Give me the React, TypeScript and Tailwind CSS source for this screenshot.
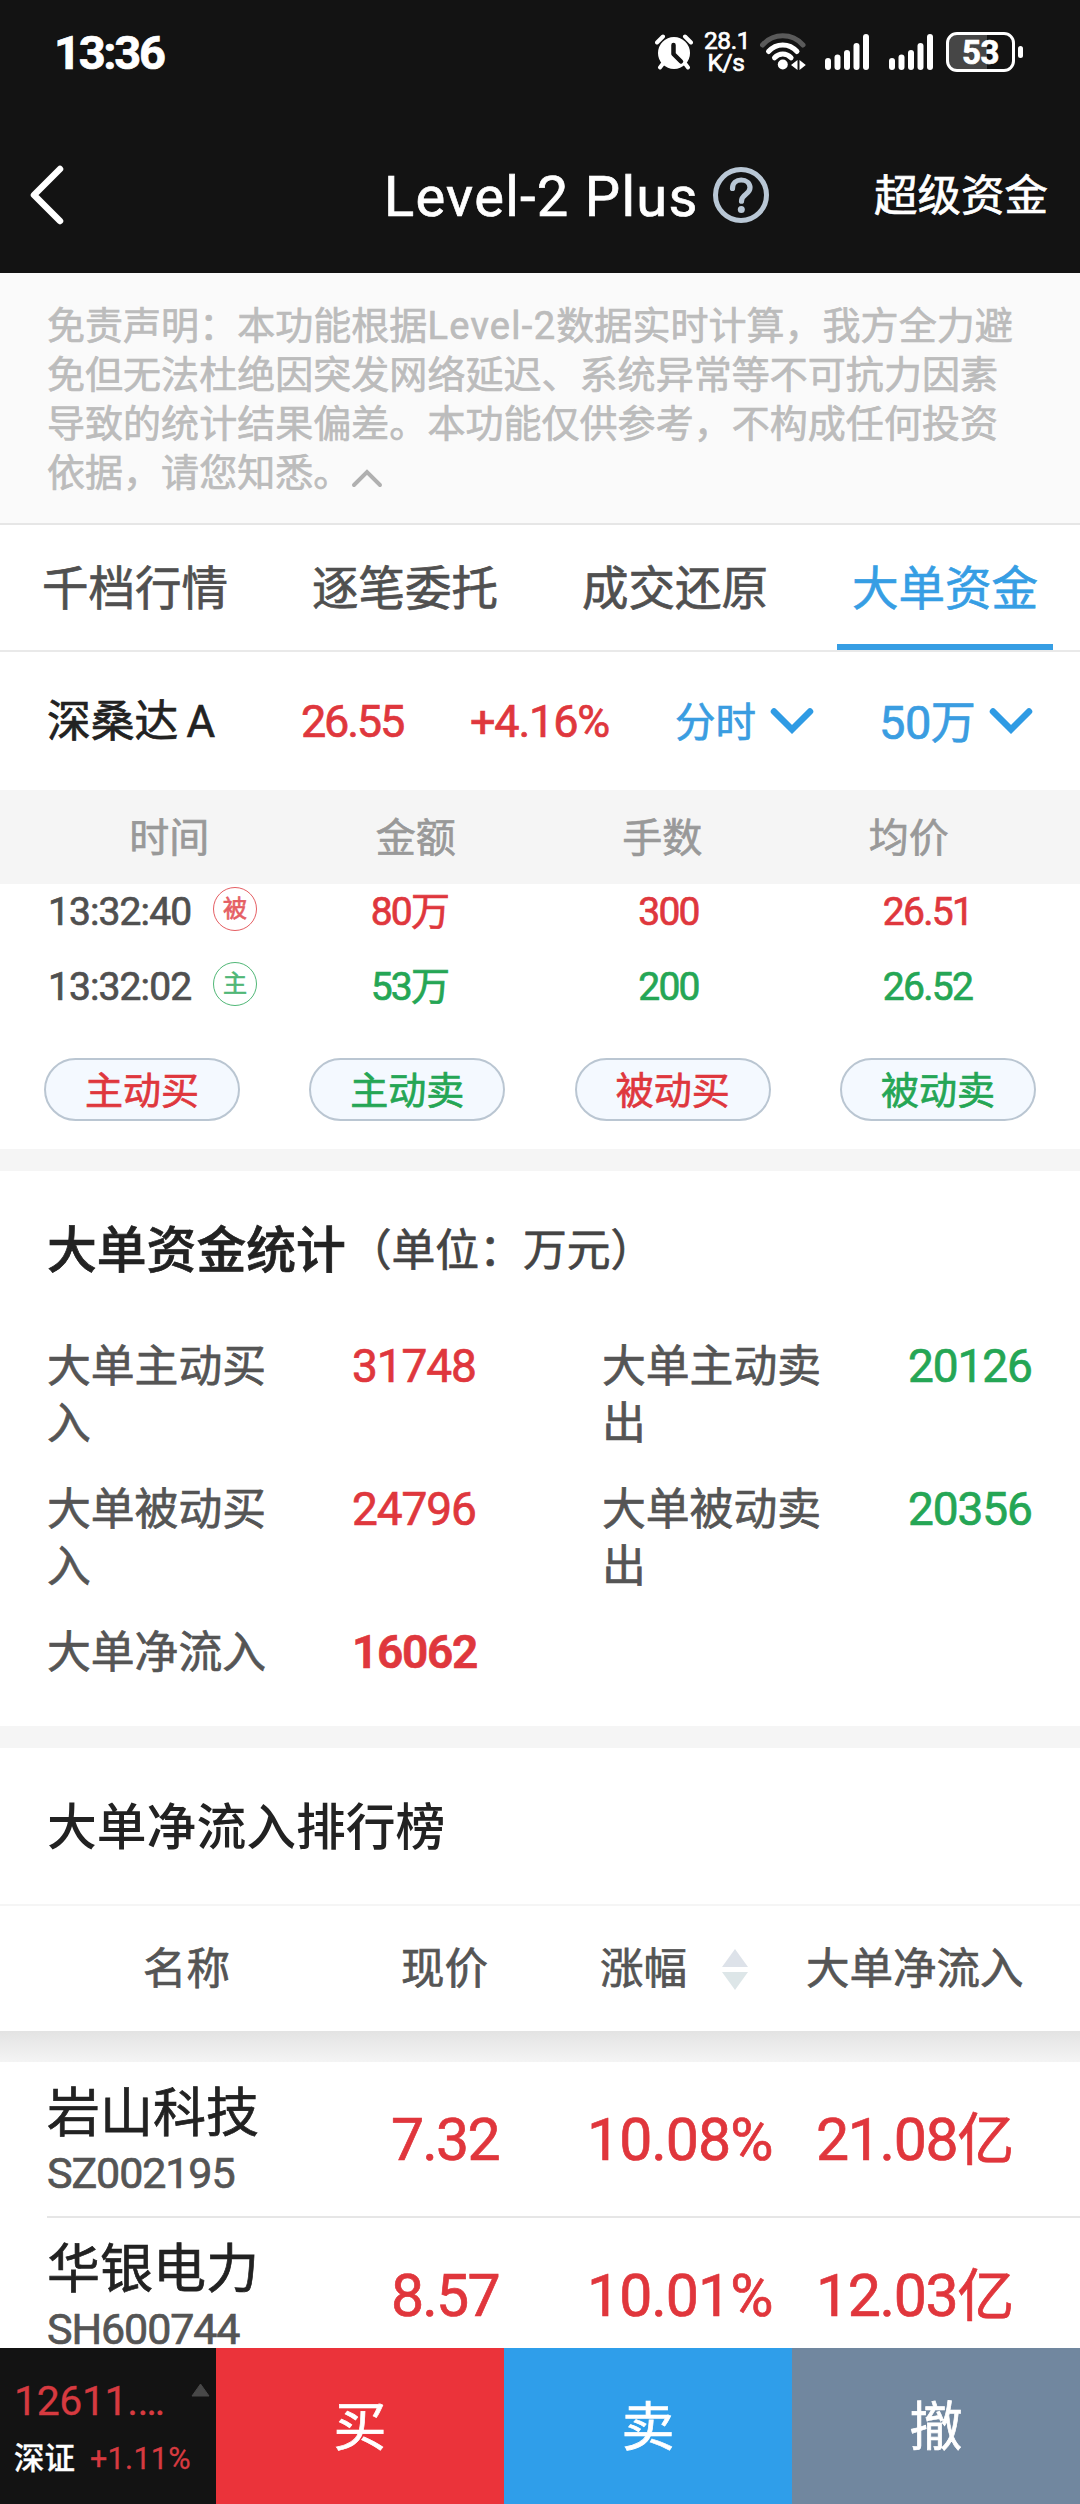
import type { ReactNode } from 'react';

type Tone = 'up' | 'down';

const toneText: Record<Tone, string> = {
  up: 'text-[#df373d]',
  down: 'text-[#25a655]',
};

const tabs = ['千档行情', '逐笔委托', '成交还原', '大单资金'];

const disclaimer: ReactNode[] = [
  <>
    免责声明：本功能根据<span className="tracking-[1.3px]">Level-2</span>数据实时计算，我方全力避
  </>,
  '免但无法杜绝因突发网络延迟、系统异常等不可抗力因素',
  '导致的统计结果偏差。本功能仅供参考，不构成任何投资',
];

const trades: { time: string; mark: string; amount: string; lots: string; price: string; tone: Tone }[] = [
  { time: '13:32:40', mark: '被', amount: '80', lots: '300', price: '26.51', tone: 'up' },
  { time: '13:32:02', mark: '主', amount: '53', lots: '200', price: '26.52', tone: 'down' },
];

const filters: { label: string; tone: Tone }[] = [
  { label: '主动买', tone: 'up' },
  { label: '主动卖', tone: 'down' },
  { label: '被动买', tone: 'up' },
  { label: '被动卖', tone: 'down' },
];

const stats: { label: string; value: string; tone: Tone }[] = [
  { label: '大单主动买入', value: '31748', tone: 'up' },
  { label: '大单主动卖出', value: '20126', tone: 'down' },
  { label: '大单被动买入', value: '24796', tone: 'up' },
  { label: '大单被动卖出', value: '20356', tone: 'down' },
];

const ranking = [
  { name: '岩山科技', code: 'SZ002195', price: '7.32', change: '10.08%', inflow: '21.08' },
  { name: '华银电力', code: 'SH600744', price: '8.57', change: '10.01%', inflow: '12.03' },
];

function AlarmIcon() {
  return (
    <svg width="38" height="36" viewBox="0 0 38 36" fill="none">
      <circle cx="19" cy="19" r="16" fill="#fff" />
      <path d="M2 8.5 8 2.5M36 8.5 30 2.5" stroke="#fff" strokeWidth="4" strokeLinecap="round" />
      <path d="M8 29.5 5 33.5M30 29.5 33 33.5" stroke="#fff" strokeWidth="4" strokeLinecap="round" />
      <path d="M18.5 11v9l7.5 7.5" stroke="#131313" strokeWidth="4.5" strokeLinecap="round" strokeLinejoin="round" />
    </svg>
  );
}

function WifiIcon() {
  return (
    <svg width="46" height="38" viewBox="0 0 46 38" fill="none" strokeLinecap="round">
      <path d="M2.5 12C13.5-.2 32-.2 43 12" stroke="#5a5a5a" strokeWidth="5" />
      <path d="M8.5 18.5c7.8-8.8 20.7-8.8 28.5 0" stroke="#fff" strokeWidth="5" />
      <path d="M14.5 24.8c4.6-5 12-5 16.6 0" stroke="#fff" strokeWidth="5" />
      <circle cx="22.8" cy="31.5" r="5" fill="#fff" />
      <path d="M37.5 27v10l-6.5-5zM39.5 27v10l6.3-5z" fill="#fff" />
    </svg>
  );
}

function SignalIcon() {
  return (
    <svg width="45" height="36" viewBox="0 0 45 36" fill="#fff">
      <rect x="0" y="24" width="6" height="12" rx="3" />
      <rect x="9.5" y="20.5" width="6" height="15.5" rx="3" />
      <rect x="19" y="16" width="6" height="20" rx="3" />
      <rect x="28.5" y="9" width="6" height="27" rx="3" />
      <rect x="38" y="0" width="6" height="36" rx="3" />
    </svg>
  );
}

function Battery() {
  return (
    <div className="flex items-center gap-[3px]">
      <div className="flex h-[40px] w-[69px] items-center justify-center rounded-[11px] border-[3px] border-white bg-[linear-gradient(90deg,#464646_38px,transparent_38px)] text-[33px] font-bold leading-none tracking-[-0.5px]">
        53
      </div>
      <div className="h-3 w-[5px] rounded-full bg-white" />
    </div>
  );
}

function ChevronDown() {
  return (
    <svg width="44" height="28" viewBox="0 0 44 28" fill="none">
      <path d="M4 4.5 22 22.5 40 4.5" stroke="#2f9be4" strokeWidth="6.5" strokeLinecap="round" />
    </svg>
  );
}

function Header() {
  return (
    <header className="h-[273px] bg-[#131313] text-white">
      <div className="flex h-[104px] items-center pl-[54px] pr-[57px]">
        <div className="flex-1 text-[47px] font-bold leading-none tracking-[-2.3px]">13:36</div>
        <AlarmIcon />
        <div className="ml-[11px] mr-[12px] w-[44px] text-center text-[24.5px] leading-[22px] tracking-[-0.4px]">
          <div>28.1</div>
          <div>K/s</div>
        </div>
        <WifiIcon />
        <div className="ml-[19px] mr-[12px] flex gap-[19px]">
          <SignalIcon />
          <SignalIcon />
        </div>
        <Battery />
      </div>
      <div className="grid h-[182px] grid-cols-[384px_1fr_206px] items-center">
        <svg className="ml-[28px]" width="38" height="62" viewBox="0 0 38 62" fill="none">
          <path d="M32 5 6 31l26 26" stroke="#fff" strokeWidth="6.5" strokeLinecap="round" strokeLinejoin="round" />
        </svg>
        <div className="flex items-center">
          <h1 className="w-[329px] whitespace-nowrap pt-1 text-[56px] leading-none tracking-[1.3px]">Level-2 Plus</h1>
          <svg width="56" height="58" viewBox="0 0 56 58" fill="none" stroke="#b9c7d5">
            <circle cx="28" cy="29" r="25.5" strokeWidth="5" />
            <path
              d="M19.5 22.5c0-5.5 4-8.500 8.700-8.500 5 0 8.800 3 8.800 7.800 0 6.700-8.500 6.200-8.500 13.400"
              strokeWidth="5.2"
              strokeLinecap="round"
            />
            <circle cx="28.3" cy="43.5" r="3.5" fill="#b9c7d5" stroke="none" />
          </svg>
        </div>
        <div className="pt-1 text-[43.5px] leading-none">超级资金</div>
      </div>
    </header>
  );
}

function Disclaimer() {
  return (
    <section className="h-[252px] whitespace-nowrap border-b-2 border-[#e6e6e6] bg-[#fafafa] pl-[47px] pt-[29px] text-[38px] leading-[49px] tracking-[0.04px] text-[#bcbcbc]">
      {disclaimer.map((line, index) => (
        <p key={index}>{line}</p>
      ))}
      <p className="flex items-center">
        依据，请您知悉。
        <svg className="mt-2" width="32" height="22" viewBox="0 0 32 22" fill="none">
          <path d="M3 18 16 5l13 13" stroke="#b0b0b0" strokeWidth="4" strokeLinecap="round" />
        </svg>
      </p>
    </section>
  );
}

function Tabs() {
  return (
    <nav className="grid h-[127px] grid-cols-4 border-b-2 border-[#e9e9e9]">
      {tabs.map((tab, index) => (
        <div
          key={tab}
          className={
            index === 3
              ? 'mx-[27px] flex items-center justify-center whitespace-nowrap border-b-[6px] border-[#369ee4] pt-[10px] text-[46.5px] text-[#369ee4]'
              : 'flex items-center justify-center whitespace-nowrap pt-1 text-[46.5px] text-[#505050]'
          }
        >
          {tab}
        </div>
      ))}
    </nav>
  );
}

function Quote() {
  return (
    <section className="grid h-[138px] grid-cols-[254px_169px_205px_95px_109px_110px_1fr] items-center whitespace-nowrap pl-[47px] text-[45px] leading-none">
      <div className="pt-1 text-[43.8px] text-[#222]">
        深桑达<span className="ml-2">A</span>
      </div>
      <div className="tracking-[-2.2px] text-[#df373d]">26.55</div>
      <div className="tracking-[-1.2px] text-[#df373d]">+4.16%</div>
      <div className="pt-1 text-[40.5px] text-[#3a9de1]">分时</div>
      <ChevronDown />
      <div className="pt-0.5 tracking-[-0.5px] text-[#3a9de1]">
        <span className="text-[47px]">50</span>万
      </div>
      <ChevronDown />
    </section>
  );
}

function Trades() {
  return (
    <section>
      <div className="grid h-[94px] grid-cols-[repeat(4,246.5px)] items-center bg-[#f5f5f5] pl-[46px] pt-[3px] text-center text-[40px] text-[#999]">
        <div>时间</div>
        <div>金额</div>
        <div>手数</div>
        <div>均价</div>
      </div>
      <div className="h-[174px] overflow-hidden">
        <div className="mt-[-9px]">
          {trades.map((trade) => (
            <div
              key={trade.time}
              className={`grid h-[75px] grid-cols-[166px_67px_repeat(3,259px)] items-center pl-[47px] text-center text-[39px] leading-none tracking-[-1.7px] ${toneText[trade.tone]}`}
            >
              <div className="pl-px text-left tracking-[-0.9px] text-[#505050]">{trade.time}</div>
              <div className="mb-2 flex size-[44px] items-center justify-center rounded-full border-[1.5px] border-current pt-px text-[24px] tracking-normal opacity-80">
                {trade.mark}
              </div>
              <div>{trade.amount}万</div>
              <div>{trade.lots}</div>
              <div>{trade.price}</div>
            </div>
          ))}
        </div>
      </div>
      <div className="flex h-[91px] justify-between px-[44px]">
        {filters.map((filter) => (
          <button
            key={filter.label}
            type="button"
            className={`flex h-[63px] w-[196px] items-center justify-center rounded-full border-2 border-[#bac6d2] bg-[#f4f9ff] pt-0.5 text-[38px] leading-none ${toneText[filter.tone]}`}
          >
            {filter.label}
          </button>
        ))}
      </div>
    </section>
  );
}

function Stats() {
  return (
    <section className="h-[577px] border-t-[22px] border-[#f5f5f5] pl-[47px] pt-[52px]">
      <h2 className="flex items-center whitespace-nowrap text-[49.8px] font-medium leading-[56px] text-[#222]">
        大单资金统计
        <span className="ml-0.5 text-[43.8px] font-normal text-[#444]">（单位：万元）</span>
      </h2>
      <div className="mt-[60px] grid grid-cols-[305px_250px_306px_1fr] gap-y-[29px] text-[43.8px] leading-[57px] text-[#555]">
        {stats.map((item) => (
          <div key={item.label} className="contents">
            <div className="w-[222px]">{item.label}</div>
            <div className={`-mt-px text-[46px] tracking-[-1.1px] ${toneText[item.tone]}`}>{item.value}</div>
          </div>
        ))}
        <div>大单净流入</div>
        <div className="-mt-px text-[46px] font-semibold tracking-[-1.3px] text-[#df373d]">16062</div>
      </div>
    </section>
  );
}

function Ranking() {
  return (
    <section>
      <h2 className="flex h-[180px] items-center border-b-2 border-t-[22px] border-b-[#f5f5f5] border-t-[#f5f5f5] pl-[47px] pt-1 text-[49.8px] font-medium text-[#222] [-webkit-text-stroke:0]">
        大单净流入排行榜
      </h2>
      <div className="grid h-[125px] grid-cols-[258px_199px_122px_84px_1fr] items-center whitespace-nowrap pl-[143px] pt-[3px] text-[43.5px] text-[#555]">
        <div>名称</div>
        <div>现价</div>
        <div>涨幅</div>
        <svg width="26" height="42" viewBox="0 0 26 42">
          <path d="M13 0 26 18H0z" fill="#dde2e9" />
          <path d="M13 41 26 23H0z" fill="#dde6e8" />
        </svg>
        <div>大单净流入</div>
      </div>
      <div className="h-[31px] bg-linear-to-b from-[#e3e3e3] to-[#f4f4f4]" />
      {ranking.map((stock) => (
        <div
          key={stock.code}
          className="ml-[47px] grid h-[156px] grid-cols-[344px_196px_229px_1fr] items-center border-b-2 border-[#e6e6e6] text-[59px] leading-none text-[#e0363c]"
        >
          <div className="pt-[10px]">
            <div className="text-[53px] leading-[58px] text-[#222]">{stock.name}</div>
            <div className="text-[43px] leading-[60px] tracking-[-1.1px] text-[#555]">{stock.code}</div>
          </div>
          <div className="tracking-[-1.8px]">{stock.price}</div>
          <div className="tracking-[-1px]">{stock.change}</div>
          <div className="tracking-[-1.4px]">
            {stock.inflow}
            <span className="text-[57px]">亿</span>
          </div>
        </div>
      ))}
    </section>
  );
}

function TradeBar() {
  return (
    <footer className="grid h-[156px] shrink-0 grid-cols-[216px_repeat(3,288px)] text-[53px] text-white">
      <div className="bg-[#131313] pl-[14px] pt-[31px] text-[#d73a40] [-webkit-text-stroke:0.3px]">
        <div className="flex h-[44px] text-[41px] leading-[44px]">
          <span className="w-[177px] tracking-[-0.4px]">12611.…</span>
          <svg width="19" height="14" viewBox="0 0 19 14" className="mt-1">
            <path d="M9.5 1 18 13H1z" fill="#484848" stroke="#484848" strokeLinejoin="round" />
          </svg>
        </div>
        <div className="mt-[16px] flex gap-[15px] text-[30.5px] leading-[40px]">
          <span className="font-medium text-white">深证</span>
          <span className="tracking-[0.3px]">+1.11%</span>
        </div>
      </div>
      <button type="button" className="bg-[#eb333a] pt-[5px]">
        买
      </button>
      <button type="button" className="bg-[#2f9eea] pt-[5px]">
        卖
      </button>
      <button type="button" className="bg-[#71879f] pt-[5px]">
        撤
      </button>
    </footer>
  );
}

export default function App() {
  return (
    <div className="flex h-[2504px] w-[1080px] flex-col overflow-hidden bg-white font-['Roboto','Noto_Sans_CJK_SC',sans-serif] [-webkit-text-stroke:0.7px]">
      <main className="h-[2348px] overflow-hidden">
        <Header />
        <Disclaimer />
        <Tabs />
        <Quote />
        <Trades />
        <Stats />
        <Ranking />
      </main>
      <TradeBar />
    </div>
  );
}
